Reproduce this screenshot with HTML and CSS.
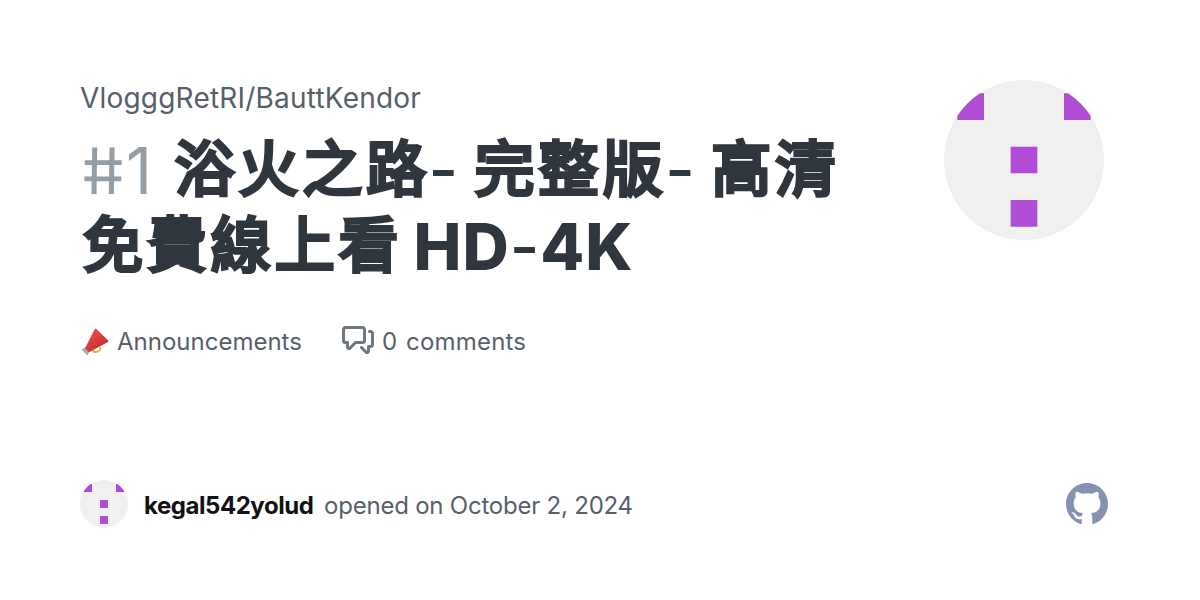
FILE: index.html
```html
<!DOCTYPE html>
<html lang="zh-Hant">
<head>
    <meta charset="UTF-8">
    <meta name="viewport" content="width=device-width, initial-scale=1.0">
    <title>VlogggRetRI/BauttKendor</title>
    <link rel="stylesheet" href="styles.css">
</head>
<body>
    <div class="card">
        <div class="top">
            <div class="content">
                <div class="repo">VlogggRetRI/BauttKendor</div>
                <h1 class="title">
                    <div class="line"><span class="number"><span class="hash">#</span>1</span><span class="cjk">浴火之路</span><span class="dash">-</span><span class="cjk">完整版</span><span class="dash">-</span><span class="cjk">高清</span></div>
                    <div class="line second"><span class="cjk">免費線上看</span><span class="latin">HD<span class="dash-inner">-</span>4K</span></div>
                </h1>
                <div class="meta">
                    <div class="category">
                        <svg class="horn" viewBox="0 0 28 28">
                            <defs>
                                <linearGradient id="red" x1="0" y1="0" x2="0.6" y2="1">
                                    <stop offset="0" stop-color="#e9574f"/>
                                    <stop offset="0.6" stop-color="#db3d3d"/>
                                    <stop offset="1" stop-color="#b92833"/>
                                </linearGradient>
                            </defs>
                            <path d="M10 21.5c1.2 3 4 3.2 6.4 1.8 1.9-1.1 2.2-2.7 1.1-4.3" fill="none" stroke="#f2a51f" stroke-width="1.8"/>
                            <path d="M-.5 21.4l4-2.2 4 4.4-2 4z" fill="#a5a9ab"/>
                            <path d="M3 20.2L12.8 1q.8-.9 1.7 0L26.2 12.4q.6 1-.3 1.6L7 24.2z" fill="url(#red)"/>
                        </svg>
                        <span class="category-name">Announcements</span>
                    </div>
                    <div class="comments">
                        <svg class="bubbles" viewBox="0 0 16 16">
                            <path d="M1.75 1h8.5c.966 0 1.75.784 1.75 1.75v5.5A1.75 1.75 0 0 1 10.25 10H7.061l-2.574 2.573A1.458 1.458 0 0 1 2 11.543V10h-.25A1.75 1.75 0 0 1 0 8.25v-5.5C0 1.784.784 1 1.75 1ZM1.5 2.75v5.5c0 .138.112.25.25.25h1a.75.75 0 0 1 .75.75v2.19l2.72-2.72a.749.749 0 0 1 .53-.22h3.5a.25.25 0 0 0 .25-.25v-5.5a.25.25 0 0 0-.25-.25h-8.5a.25.25 0 0 0-.25.25Zm13 2a.25.25 0 0 0-.25-.25h-.5a.75.75 0 0 1 0-1.5h.5c.966 0 1.75.784 1.75 1.75v5.5A1.75 1.75 0 0 1 14.25 12H14v1.543a1.458 1.458 0 0 1-2.487 1.03L9.22 12.28a.749.749 0 0 1 .326-1.275.749.749 0 0 1 .734.215l2.22 2.22v-2.19a.75.75 0 0 1 .75-.75h1a.25.25 0 0 0 .25-.25Z"/>
                        </svg>
                        <span class="count">0</span>
                        <span class="count-label">comments</span>
                    </div>
                </div>
            </div>
            <svg class="avatar" viewBox="0 0 420 420">
                <rect width="420" height="420" fill="#f0f0f0"/>
                <path d="M35 35h70v70H35zM315 35h70v70h-70zM175 175h70v70h-70zM175 315h70v70h-70z" fill="#b04dd4"/>
            </svg>
        </div>

        <div class="bottom">
            <svg class="avatar small" viewBox="0 0 420 420">
                <rect width="420" height="420" fill="#f0f0f0"/>
                <path d="M35 35h70v70H35zM315 35h70v70h-70zM175 175h70v70h-70zM175 315h70v70h-70z" fill="#b04dd4"/>
            </svg>
            <span class="author">kegal542yolud</span>
            <span class="opened">opened on October 2, 2024</span>
            <svg class="github" viewBox="0 0 16 16">
                <path d="M8 0C3.58 0 0 3.58 0 8c0 3.54 2.29 6.53 5.47 7.59.4.07.55-.17.55-.38 0-.19-.01-.82-.01-1.49-2.01.37-2.53-.49-2.69-.94-.09-.23-.48-.94-.82-1.13-.28-.15-.68-.52-.01-.53.63-.01 1.08.58 1.23.82.72 1.21 1.87.87 2.33.66.07-.52.28-.87.51-1.07-1.78-.2-3.64-.89-3.64-3.95 0-.87.31-1.59.82-2.15-.08-.2-.36-1.02.08-2.12 0 0 .67-.21 2.2.82.64-.18 1.32-.27 2-.27.68 0 1.36.09 2 .27 1.53-1.04 2.2-.82 2.2-.82.44 1.1.16 1.92.08 2.12.51.56.82 1.27.82 2.15 0 3.07-1.87 3.75-3.65 3.95.29.25.54.73.54 1.48 0 1.07-.01 1.93-.01 2.2 0 .21.15.46.55.38A8.013 8.013 0 0 0 16 8c0-4.42-3.58-8-8-8z"/>
            </svg>
        </div>
    </div>
</body>
</html>
```
FILE: styles.css
```css
* {
    box-sizing: border-box;
}

body {
    margin: 0;
    background: #fff;
    font-family: Inter, "Noto Sans CJK JP", sans-serif;
    color: #57606a;
}

.card {
    width: 1200px;
    height: 600px;
    padding: 80px 92px 72px 80px;
    display: flex;
    flex-direction: column;
    justify-content: space-between;
}

.top {
    display: flex;
    justify-content: space-between;
    padding-right: 4px;
}

.repo {
    font-size: 28px;
    line-height: 36px;
    letter-spacing: 0.2px;
    white-space: nowrap;
}

.title {
    margin: 17px 0 0;
    font-size: 64px;
    color: #2f363d;
}

.line {
    display: flex;
    height: 76px;
    line-height: 76px;
    white-space: nowrap;
}

.number {
    display: flex;
    width: 94px;
    padding-left: 3px;
    font-weight: 400;
    color: #959da5;
}

/* upright bars */
.hash {
    width: 43px;
    transform: skewX(9deg) scaleX(1.06);
}

.cjk {
    line-height: 64px;
    font-family: "Noto Sans CJK JP", sans-serif;
    font-size: 60px;
    font-weight: 400;
    letter-spacing: 3.9px;
    -webkit-text-stroke: 3.8px #2f363d;
}

.number + .cjk {
    margin-left: 0.5px;
    margin-right: -0.5px;
}

.dash {
    width: 45px;
    line-height: 74px;
    margin-left: -1px;
    margin-right: 1px;
    font-weight: 500;
}

.second {
    padding-left: 3px;
}

.latin {
    margin-left: 11px;
    letter-spacing: 1px;
    font-weight: 800;
}

.dash-inner {
    font-weight: 500;
}

.meta {
    display: flex;
    margin-top: 39px;
    height: 32px;
    font-size: 24px;
    line-height: 36px;
}

.category,
.comments {
    display: flex;
    white-space: nowrap;
}

.category {
    width: 262px;
}

.horn {
    width: 28px;
    height: 28px;
    margin: 4px 7px 0 2px;
    overflow: visible;
}

.bubbles {
    width: 32px;
    height: 32px;
    margin-right: 8px;
    fill: #6e7781;
}

.count {
    width: 24px;
}

.count-label {
    letter-spacing: 0.2px;
}

.avatar {
    flex: none;
    width: 160px;
    height: 160px;
    border-radius: 50%;
}

.bottom {
    display: flex;
    align-items: center;
    height: 48px;
    font-size: 24px;
    line-height: 36px;
    white-space: nowrap;
}

.small {
    width: 48px;
    height: 48px;
    margin-right: 16px;
}

.author,
.opened {
    padding-top: 4px;
}

.author {
    width: 180px;
    font-weight: 700;
    letter-spacing: -0.45px;
    color: #101214;
}

.opened {
    letter-spacing: -0.22px;
}

.github {
    width: 42px;
    height: 42px;
    margin-left: auto;
    fill: #8491b0;
}
```
